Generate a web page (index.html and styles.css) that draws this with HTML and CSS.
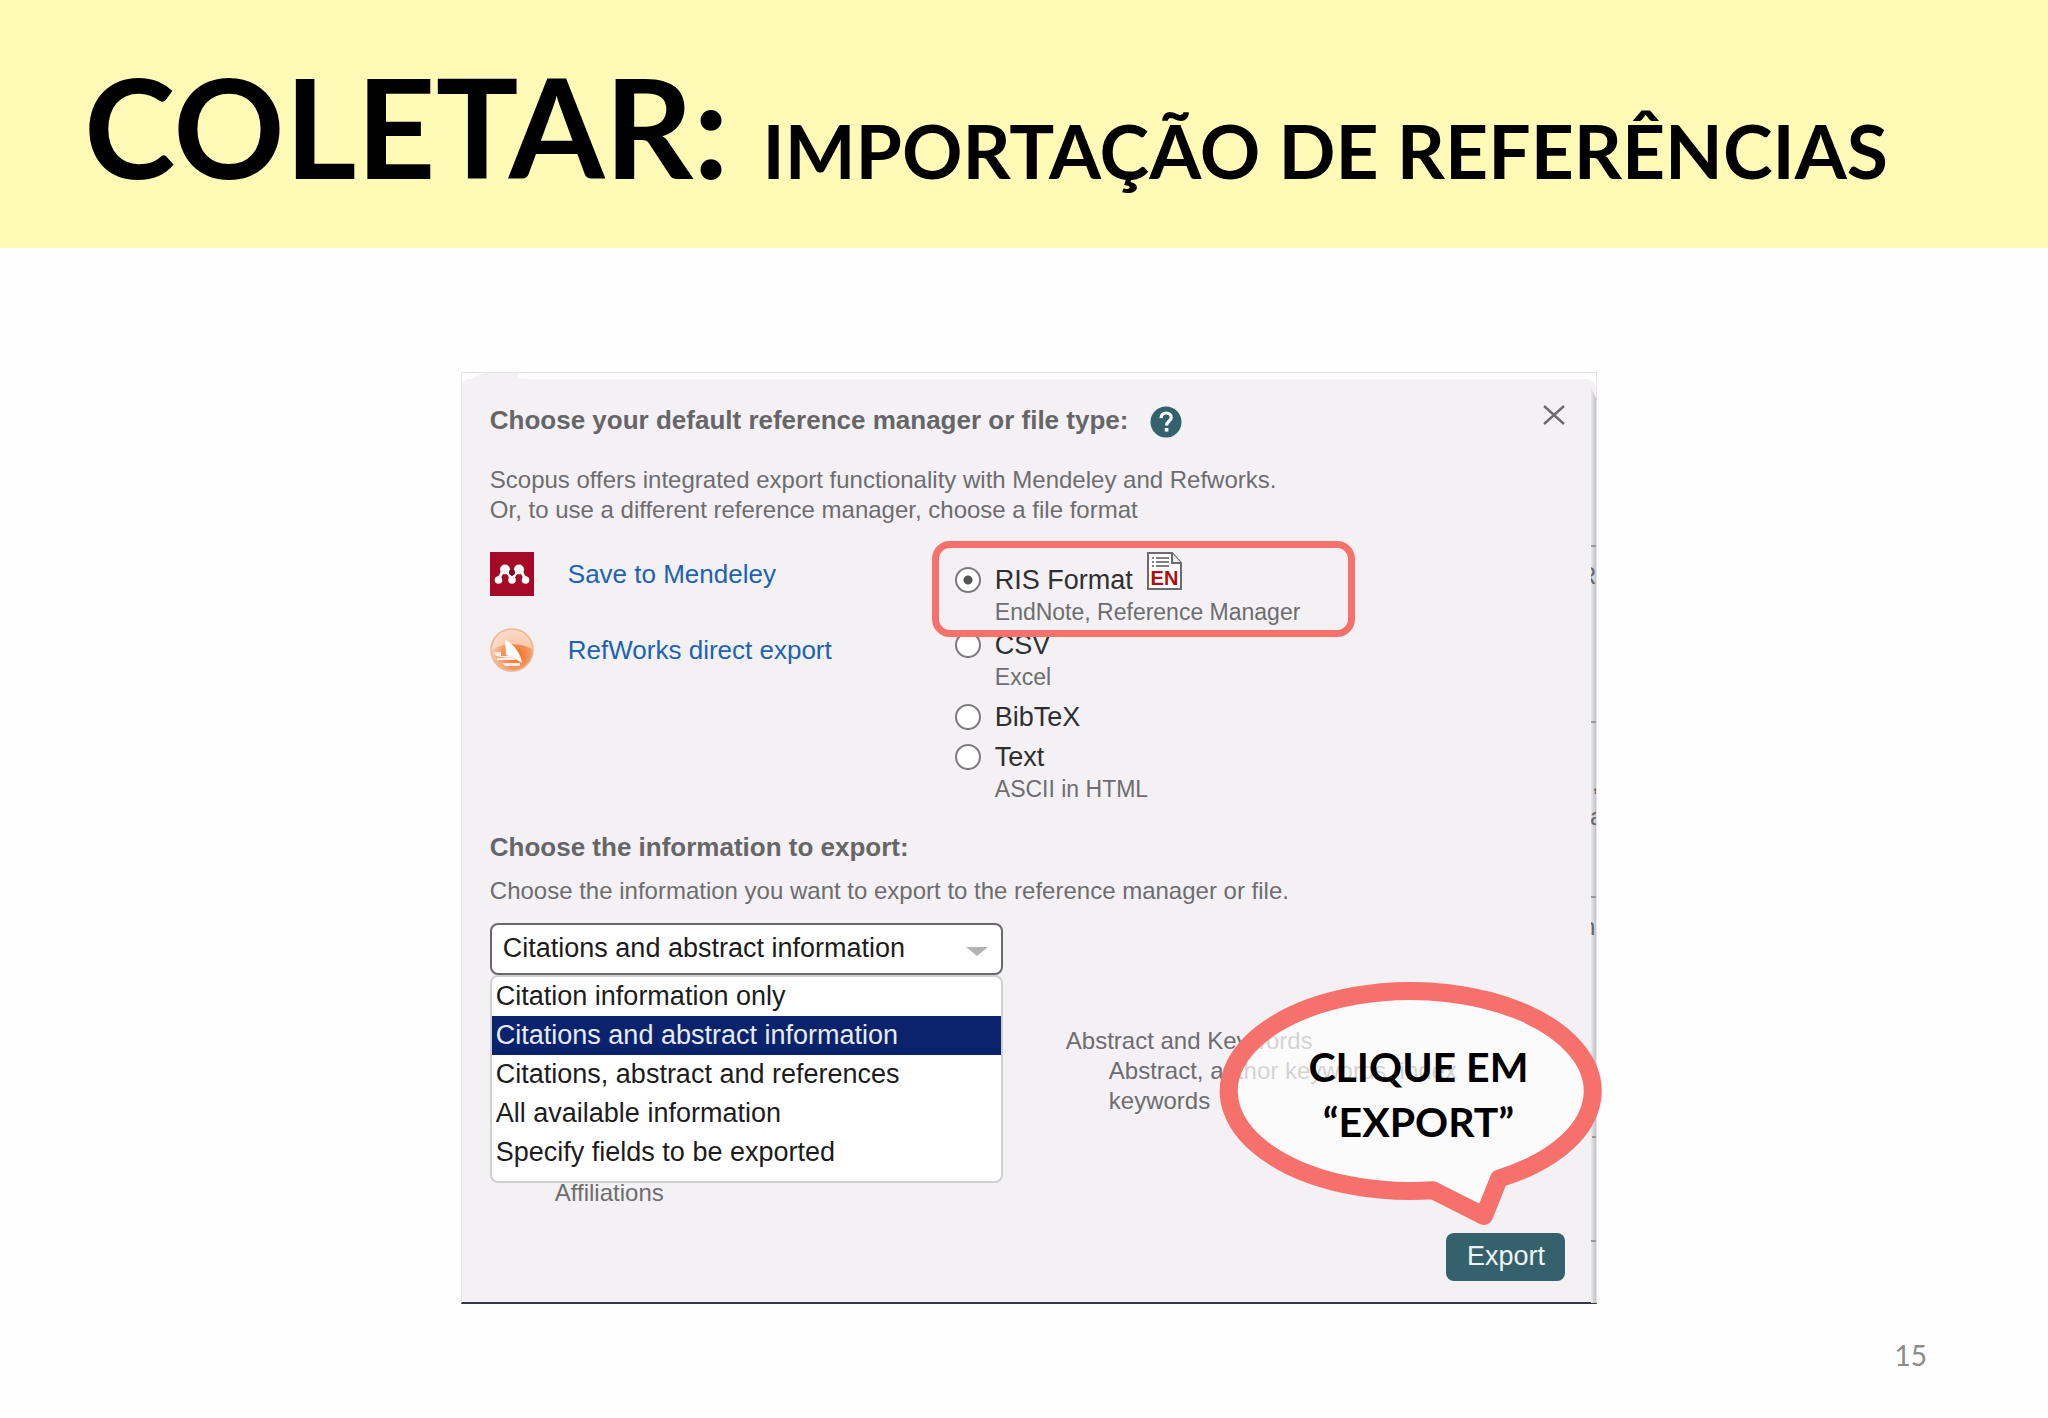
FILE: index.html
```html
<!DOCTYPE html>
<html lang="pt-BR">
<head>
<meta charset="utf-8">
<title>Coletar: importação de referências</title>
<link rel="stylesheet" href="styles.css">
</head>
<body>
<div class="slide">
  <header class="banner">
    <h1 class="title">COLETAR: <span class="subtitle">IMPORTAÇÃO DE REFERÊNCIAS</span></h1>
  </header>

  <main class="stage">
    <section class="figure">
      <div class="panel" lang="en">
        <div class="panel-head">
          <h2 class="heading">Choose your default reference manager or file type:</h2>
          <button class="icon-button help" type="button" aria-label="Help">
            <svg width="32" height="32" viewBox="0 0 32 32"><circle cx="16" cy="16" r="15.5" fill="#33616c"/><path d="M11 12.2C11.2 8.6 13.4 7 16.2 7c3 0 5 1.8 5 4.4 0 3.8-4.600 4-4.600 8" fill="none" stroke="#fff" stroke-width="3.200"/><rect x="14.800" y="22" width="3.600" height="3.600" fill="#fff"/></svg>
          </button>
          <button class="icon-button close" type="button" aria-label="Close">
            <svg width="22" height="20" viewBox="0 0 22 20"><path d="M1 1 21 19M21 1 1 19" stroke="#6c6c6e" stroke-width="2.400"/></svg>
          </button>
        </div>

        <p class="note intro">Scopus offers integrated export functionality with Mendeley and Refworks.<br>Or, to use a different reference manager, choose a file format</p>

        <div class="choices">
          <ul class="services">
            <li class="service">
              <svg width="44" height="44" viewBox="0 0 44 44"><rect width="44" height="44" fill="#a50a26"/><g stroke="#fff" fill="none" stroke-width="3"><path d="M8 28 13 19M36 28 31 19M22 28 17 19M22 28 27 19"/></g><g fill="#fff"><circle cx="15" cy="17.500" r="5"/><circle cx="29" cy="17.500" r="5"/><circle cx="8.500" cy="28" r="3.800"/><circle cx="22" cy="28" r="3.800"/><circle cx="35.500" cy="28" r="3.800"/></g><circle cx="22" cy="20.500" r="3" fill="#7d0a20"/></svg>
              <a class="link" href="#mendeley">Save to Mendeley</a>
            </li>
            <li class="service">
              <svg width="44" height="44" viewBox="0 0 44 44"><defs><radialGradient id="rw" cx="60%" cy="62%" r="58%"><stop offset="0" stop-color="#ef6a1c"/><stop offset=".6" stop-color="#f39a66"/><stop offset="1" stop-color="#f8cdb4"/></radialGradient></defs><circle cx="22" cy="22" r="21" fill="url(#rw)" stroke="#f0b493" stroke-width="1.500"/><path d="M2 22C3 9 11 2 22 2s19 7 20 19C32 15 14 14 2 22Z" fill="#fbdccb" opacity=".75"/><path d="M15 12C19 13 31 23 32 35L24 30 16 27Z" fill="#fff"/><path d="M4 24h7v4h12l3 4H7v-2h9L6 28ZM12 35h18v3H15Z" fill="#fdebe1"/></svg>
              <a class="link" href="#refworks">RefWorks direct export</a>
            </li>
          </ul>

          <div class="formats" role="radiogroup" aria-label="File format">
            <div class="format highlighted">
              <input class="radio" type="radio" name="format" id="ris" checked>
              <label class="format-name" for="ris">RIS Format
                <svg class="en-icon" width="35" height="38" viewBox="0 0 35 38"><path d="M1 1h24l9 10v26H1Z" fill="#fff" stroke="#6b6b6b" stroke-width="2"/><path d="M25 1v10h9" fill="#eee" stroke="#6b6b6b" stroke-width="2"/><path d="M5 6h2M5 10h2M5 14h2M9 6h13M9 10h13M9 14h13" stroke="#555" stroke-width="1.500"/><text x="17.500" y="33" text-anchor="middle" class="en-text">EN</text></svg>
              </label>
              <span class="format-note">EndNote, Reference Manager</span>
            </div>
            <div class="format">
              <input class="radio" type="radio" name="format" id="csv">
              <label class="format-name" for="csv">CSV</label>
              <span class="format-note">Excel</span>
            </div>
            <div class="format">
              <input class="radio" type="radio" name="format" id="bibtex">
              <label class="format-name" for="bibtex">BibTeX</label>
            </div>
            <div class="format">
              <input class="radio" type="radio" name="format" id="text">
              <label class="format-name" for="text">Text</label>
              <span class="format-note">ASCII in HTML</span>
            </div>
          </div>
        </div>

        <h2 class="heading">Choose the information to export:</h2>
        <p class="note prompt"><label for="info">Choose the information you want to export to the reference manager or file.</label></p>

        <div class="dropdown">
          <select class="select" id="info">
            <option>Citation information only</option>
            <option selected>Citations and abstract information</option>
            <option>Citations, abstract and references</option>
            <option>All available information</option>
            <option>Specify fields to be exported</option>
          </select>
          <svg class="arrow" width="22" height="9" viewBox="0 0 22 9"><path d="M0 0h22L11 9Z" fill="#b3b3b5"/></svg>
          <ul class="menu" role="listbox" aria-label="Information to export">
            <li class="item" role="option">Citation information only</li>
            <li class="item active" role="option" aria-selected="true">Citations and abstract information</li>
            <li class="item" role="option">Citations, abstract and references</li>
            <li class="item" role="option">All available information</li>
            <li class="item" role="option">Specify fields to be exported</li>
          </ul>
        </div>

        <div class="details">
          <p class="note affiliations">Affiliations</p>
          <dl class="note fields">
            <dt>Abstract and Keywords</dt>
            <dd class="field-list">Abstract, author keywords, index<br>keywords</dd>
          </dl>
        </div>

        <button class="export" type="button">Export</button>
      </div>

      <svg class="tab" width="60" height="7" viewBox="0 0 60 7"><path d="M0 7C8 2 12 0 18 0h30v5l12 2Z" fill="#f3f1f3"/></svg>

      <svg class="edge" width="5" height="923" viewBox="0 0 5 923" aria-hidden="true">
        <defs><linearGradient id="shade"><stop offset="0" stop-color="#e9e8ea"/><stop offset="1" stop-color="#c2c2c5"/></linearGradient></defs>
        <path d="M0 8 5 18V923H0Z" fill="url(#shade)"/>
        <path d="M0 166h5M0 342h5M0 517h5M1 757h4M0 861h5" stroke="#999" stroke-width="2"/>
        <g class="edge-text"><text x="-12" y="204">R</text><text x="1" y="411">,</text><text x="-1" y="445">a</text><text x="-9" y="555">n</text></g>
      </svg>

      <div class="callout">
        <svg class="bubble" width="386" height="246" viewBox="0 0 386 246"><path d="M214 208.300A182 100 0 1 1 280 196.500L265 234Z" fill="#fff" fill-opacity=".7" stroke="#f7716c" stroke-width="18" stroke-linejoin="round"/></svg>
        <p class="callout-text">CLIQUE EM<br>“EXPORT”</p>
      </div>
    </section>
  </main>

  <footer class="page-number">15</footer>
</div>
</body>
</html>
```

FILE: styles.css
```css
*, *::after { box-sizing: border-box; }
body, h1, h2, p, ul, dl, dd { margin: 0; }
ul { padding: 0; list-style: none; }
svg { display: block; flex: none; }

body {
  background: #fefefe;
  color: #000;
  font-family: "Liberation Sans", Arial, sans-serif;
}

.slide {
  display: flex;
  flex-direction: column;
  min-height: 100vh;
}

/* Title band */
.banner {
  padding: 42px 84px 38px;
  background: #fffbb7;
}
.title {
  font: 700 138px/168px Lato, "Open Sans", sans-serif;
  white-space: nowrap;
}
.subtitle { font-size: 75px; line-height: 80px; }

/* Dialog figure */
.stage { padding: 124px 22% 0 22.5%; }
.figure {
  position: relative;
  padding-top: 6px;
  border: 1px solid #e4e2e6;
  border-bottom: 2px solid #34364a;
  background: #fff;
}
.panel {
  padding: 25px 31px 21px 28px;
  border-radius: 8px 10px 0 0;
  background: #f3f1f3;
}
.tab { position: absolute; top: 0; left: 8px; }
.edge { position: absolute; top: 7px; right: 0; }
.edge-text { fill: #666; font-size: 24px; }

.panel-head { display: flex; align-items: flex-start; height: 32px; }
.heading {
  color: #666669;
  font-size: 26px;
  line-height: 32px;
}
.icon-button {
  display: block;
  padding: 0;
  border: 0;
  background: none;
}
.help { margin: 2px 0 0 22px; }
.close { margin: 1px 0 0 auto; }

.note {
  color: #6d6d70;
  font-size: 24px;
  line-height: 30px;
}
.intro { margin-top: 29px; }

/* Services and file formats */
.choices {
  display: grid;
  grid-template-columns: 465px 1fr;
  margin: 27px 0 26px;
}
.services { display: flex; flex-direction: column; gap: 32px; }
.service { display: flex; align-items: center; gap: 34px; }
.link {
  color: #1d62b4;
  font-size: 26px;
  text-decoration: none;
}

.formats {
  display: flex;
  flex-direction: column;
  gap: 8px;
  padding-top: 12px;
}
.format {
  display: grid;
  grid-template-columns: 26px auto;
  column-gap: 14px;
  justify-content: start;
  align-items: center;
  grid-auto-rows: 32px;
}
.highlighted { position: relative; margin-bottom: -7px; }
.highlighted::after {
  content: "";
  position: absolute;
  z-index: 1;
  top: -23px;
  bottom: -9px;
  left: -23px;
  width: 423px;
  border: 7px solid #f7716c;
  border-radius: 18px;
}
.radio {
  width: 26px;
  height: 26px;
  margin: 0;
  border: 2px solid #7b7b7d;
  border-radius: 50%;
  background: #fff;
  appearance: none;
}
.radio:checked { background: radial-gradient(circle, #555 4px, #fff 5px); }
.format-name {
  display: flex;
  align-items: flex-end;
  gap: 14px;
  height: 32px;
  color: #2f2f32;
  font-size: 27px;
  line-height: 32px;
}
.en-icon { margin-bottom: 6px; }
.en-text { fill: #b30c0c; font-size: 20px; font-weight: 700; }
.format-note {
  grid-column: 2;
  color: #6d6d70;
  font-size: 23px;
  line-height: 32px;
}

/* Information drop-down */
.prompt { margin: 13px 0 17px; }
.dropdown { position: relative; width: 513px; }
.select {
  display: block;
  width: 100%;
  height: 52px;
  padding: 0 40px 2px 11px;
  border: 2px solid #69696b;
  border-radius: 8px;
  background: #fff;
  color: #1c1c20;
  font: 27px/32px "Liberation Sans", Arial, sans-serif;
  appearance: none;
}
.arrow { position: absolute; top: 24px; right: 15px; }
.menu {
  position: absolute;
  z-index: 1;
  top: 52px;
  left: 0;
  width: 100%;
  padding-bottom: 9px;
  border: 2px solid #d0cfd2;
  border-radius: 8px;
  background: #fff;
}
.item {
  padding-left: 4px;
  color: #1c1c20;
  font-size: 27px;
  line-height: 39px;
}
.active { background: #0a236c; color: #e8ebf5; }

.details {
  display: grid;
  grid-template-columns: 576px 1fr;
  height: 182px;
  margin: 51px 0 25px;
}
.affiliations { align-self: end; padding-left: 65px; }
.field-list { padding-left: 43px; }

.export {
  display: block;
  width: 119px;
  height: 48px;
  margin-left: auto;
  padding: 0 0 2px;
  border: 0;
  border-radius: 8px;
  background: #35616d;
  color: #eef4f6;
  font: 27px/32px "Liberation Sans", Arial, sans-serif;
}

/* Speech bubble */
.callout {
  position: absolute;
  z-index: 2;
  right: -9px;
  bottom: 74px;
}
.callout-text {
  position: absolute;
  inset: 57px 0 auto 12px;
  font: 700 41px/55px Lato, "Open Sans", sans-serif;
  text-align: center;
}

.page-number {
  padding: 34px 121px 0;
  color: #8b8b8b;
  font: 28px/34px Lato, "Open Sans", sans-serif;
  text-align: right;
}
```
